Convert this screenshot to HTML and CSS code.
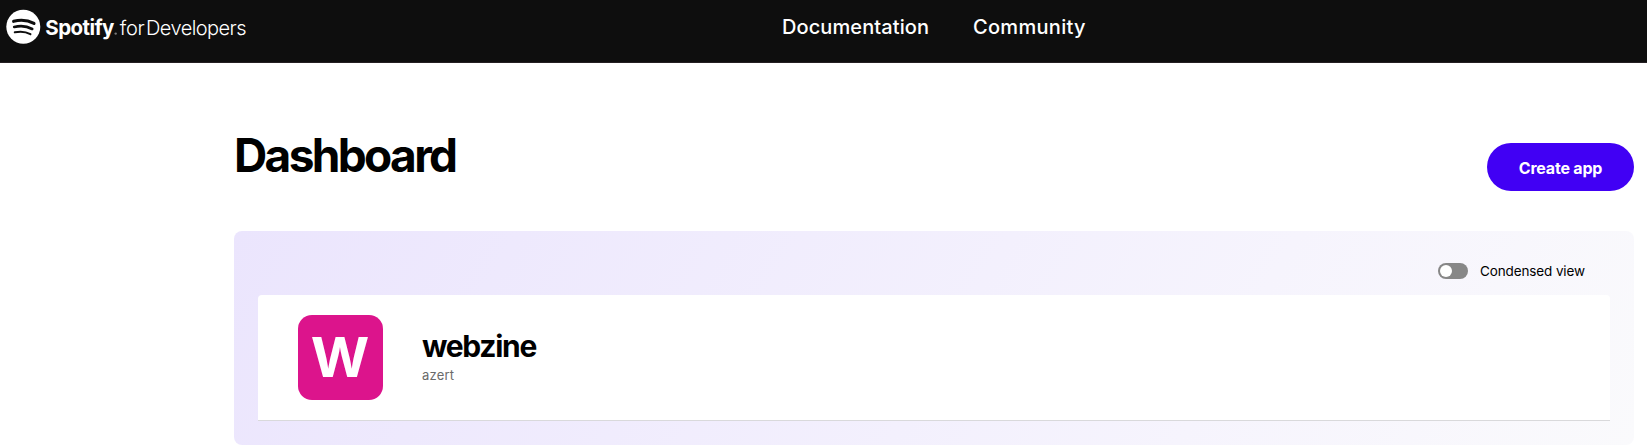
FILE: index.html
```html
<!DOCTYPE html>
<html lang="en">
<head>
<meta charset="utf-8">
<title>Dashboard | Spotify for Developers</title>
<link rel="stylesheet" href="styles.css">
</head>
<body>
<header class="topbar">
  <a class="brand">
    <svg class="logo" width="300" height="46" viewBox="0 0 300 46" role="img" aria-label="Spotify for Developers">
      <circle cx="23.3" cy="26.7" r="17" fill="#fff"/>
      <g fill="none" stroke="#0e0e0e" stroke-linecap="round">
        <path d="M13.6 21.3C20.5 19.5 28 20.2 34 23.4" stroke-width="3.1"/>
        <path d="M14.2 27C20.3 25.4 27 26.1 32.2 29" stroke-width="2.6"/>
        <path d="M14.8 32.3C20.2 31.2 26 31.7 30.4 34.2" stroke-width="2.1"/>
      </g>
      <text class="logo-name" x="45.3" y="34.8" textLength="69" lengthAdjust="spacing">Spotify</text>
      <circle cx="115.7" cy="33.6" r="1.2" fill="#777"/>
      <text class="logo-suffix" x="119.8" y="34.8" textLength="25" lengthAdjust="spacing">for</text>
      <text class="logo-suffix" x="146" y="34.8" textLength="100.5" lengthAdjust="spacing">Developers</text>
    </svg>
  </a>
  <nav class="nav">
    <a class="nav-docs">Documentation</a>
    <a class="nav-community">Community</a>
  </nav>
</header>
<main class="page">
  <div class="heading">
    <h1 class="title">Dashboard</h1>
    <button class="create"><span>Create app</span></button>
  </div>
  <section class="panel">
    <div class="toolbar">
      <span class="switch"><span class="knob"></span></span>
      <span class="switch-label">Condensed view</span>
    </div>
    <article class="card">
      <div class="app-icon">
        <svg width="85" height="85" viewBox="0 0 85 85"><text class="initial" x="12.8" y="62" textLength="58.5" lengthAdjust="spacingAndGlyphs">W</text></svg>
      </div>
      <div class="app-info">
        <h2 class="app-name">webzine</h2>
        <p class="app-desc">azert</p>
      </div>
    </article>
  </section>
</main>
</body>
</html>
```
FILE: styles.css
```css
* { box-sizing: border-box; }
body {
  margin: 0;
  background: #fff;
  color: #000;
  font-family: Inter, "Liberation Sans", sans-serif;
}
h1, h2, p { margin: 0; }

.topbar {
  display: flex;
  height: 63px;
  background: #0e0e0e;
  border-bottom: 1px solid #241f22;
}
.brand { width: 782px; }
.logo { display: block; }
.logo-name { font-size: 20.5px; font-weight: 700; fill: #fff; }
.logo-suffix { font-size: 20px; font-weight: 300; fill: #fff; }
.nav {
  display: flex;
  gap: 44px;
  padding-top: 15px;
  color: #fff;
  font-size: 20px;
  font-weight: 500;
  line-height: 24px;
  letter-spacing: 0.1px;
}
.nav-docs { width: 147px; }
.nav-community { letter-spacing: 0.3px; }

.page { padding: 0 13px 0 234px; }
.heading {
  display: flex;
  justify-content: space-between;
  height: 168px;
}
.title {
  padding-top: 64px;
  font-size: 46px;
  font-weight: 650;
  line-height: 56px;
  letter-spacing: -2.65px;
}
.create {
  width: 147px;
  height: 48px;
  margin-top: 80px;
  padding: 1px 0 0;
  border: 0;
  border-radius: 24px;
  background: #4100f4;
  color: #fff;
  font: 700 16px/24px Inter, sans-serif;
  letter-spacing: -0.2px;
}

.panel {
  height: 214px;
  padding: 32px 24px 0;
  border-radius: 8px;
  background: linear-gradient(120deg, #ebe5fd 0%, #f6f4fd 70%, #fafafc 100%);
}
.toolbar {
  display: flex;
  gap: 12px;
  height: 32px;
  padding-left: 1180px;
}
.switch {
  width: 30px;
  height: 16px;
  padding: 2px;
  border-radius: 8px;
  background: #878787;
}
.knob {
  display: block;
  width: 12px;
  height: 12px;
  border-radius: 50%;
  background: #fff;
}
.switch-label {
  font-size: 13.5px;
  line-height: 17px;
  letter-spacing: -0.12px;
  white-space: nowrap;
}
.card {
  display: flex;
  gap: 39px;
  height: 126px;
  padding: 20px 40px;
  border-bottom: 1px solid #d9d9db;
  border-radius: 4px 4px 0 0;
  background: #fff;
}
.app-icon {
  width: 85px;
  height: 85px;
  border-radius: 14px;
  background: #dc148c;
}
.app-icon svg { display: block; }
.initial { font-size: 55px; font-weight: 700; fill: #fff; }
.app-info { padding-top: 12px; }
.app-name { font-size: 30px; font-weight: 650; line-height: 38px; letter-spacing: -1.3px; }
.app-desc { color: #6a6a6a; font-size: 13px; line-height: 20px; letter-spacing: 0.2px; }
```
